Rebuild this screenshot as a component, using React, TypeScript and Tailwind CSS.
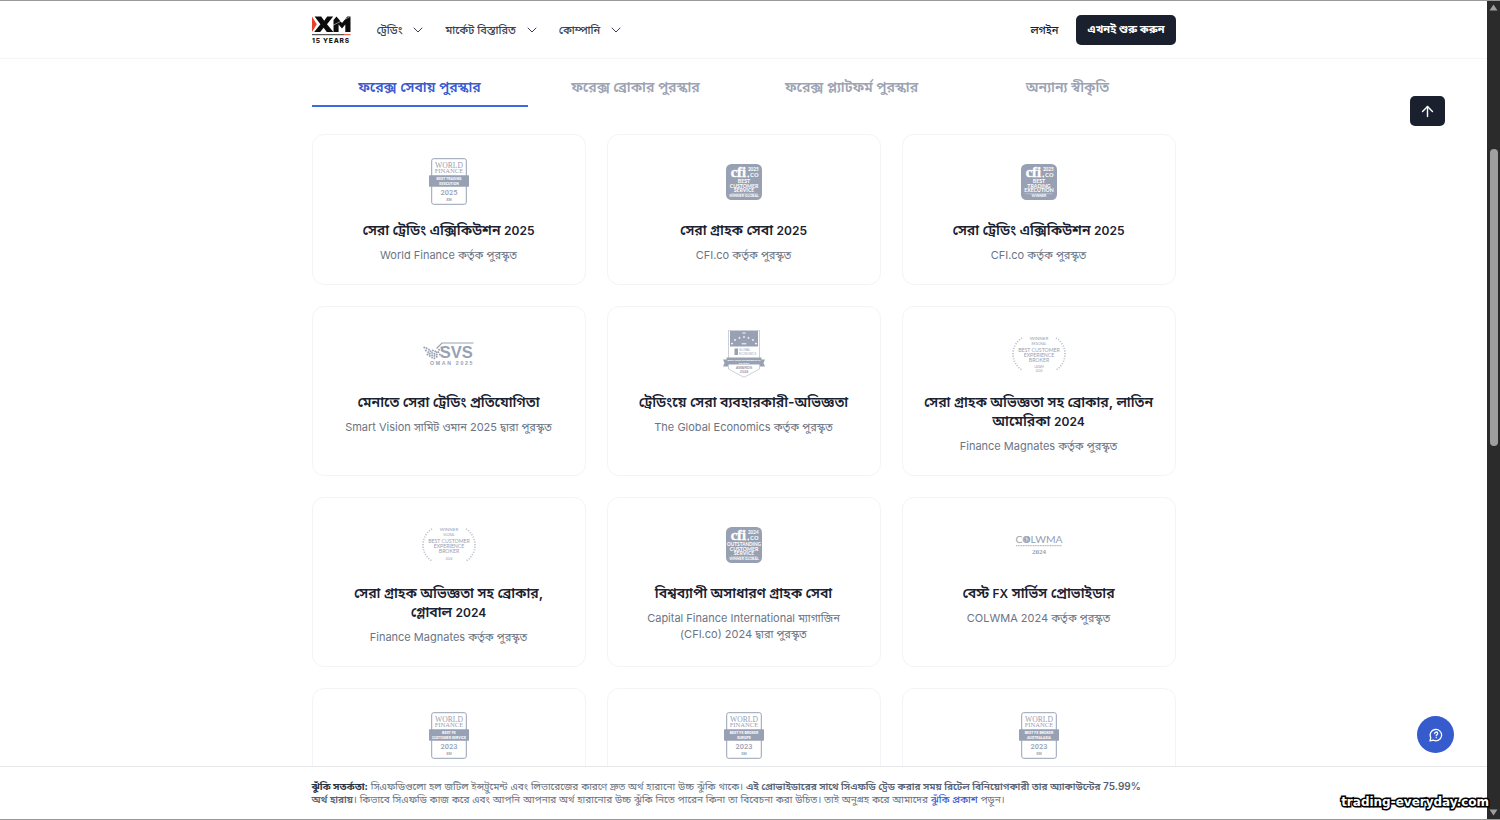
import { ArrowUp, ChevronDown } from "lucide-react";
import type { ReactNode } from "react";

const INK = "#98a1b3";

function XmLogo() {
  return (
    <svg width="40" height="28" viewBox="1 0 40 28" aria-label="XM 15 Years" role="img">
      <path d="M1 0.500L5.800 8.300L1 16z" fill="#e8402a" />
      <path d="M3.600 0.500h6.600l3 4.200 3-4.200h6l-6.200 7.700 6.400 7.800h-6.600l-3.200-4.300L9.200 16H3.200l6.200-7.800z" fill="#0c0c0c" />
      <path d="M22.500 16V3.900L25.500 0.500l5.500 6.600 5.300-6.600H39.500V16h-5.200V8.400L31 12.500l-3.400-4.100V16z" fill="#0c0c0c" />
      <path d="M21.500 9.500L38.500 1" stroke="#fff" strokeWidth="0.500" />
      <path d="M1 18.700h32" stroke="#333" strokeWidth="1" />
      <path d="M33 18.700h6.500" stroke="#e8402a" strokeWidth="1" />
      <text x="1" y="27" fontSize="6.600" fontWeight="800" fill="#1a1a1a" letterSpacing="0.800" fontFamily="Inter, sans-serif">15 YEARS</text>
    </svg>
  );
}

function WorldFinance({ lines, year }: { lines: [string, string]; year: string }) {
  return (
    <svg width="42" height="47" viewBox="0 0 42 47" fill={INK} textAnchor="middle" aria-hidden="true">
      <rect x="3.700" y="0.700" width="34.600" height="45.600" rx="2" fill="none" stroke={INK} strokeWidth="1" />
      <g fontFamily="Liberation Serif, serif" fontSize="7.600">
        <text x="21" y="9.600">WORLD</text>
        <text x="21" y="15" fontSize="6.600">FINANCE</text>
      </g>
      <rect x="1" y="17.300" width="40" height="11.500" rx="0.700" />
      <g fontFamily="Roboto, sans-serif" fontWeight="700">
        <text x="21" y="22.200" fontSize="3.600" fill="#fff">{lines[0]}</text>
        <text x="21" y="26.800" fontSize="3.600" fill="#fff">{lines[1]}</text>
        <text x="21" y="36.800" fontSize="7.400" fontWeight="500">{year}</text>
        <text x="21" y="43" fontSize="3.600">XM</text>
      </g>
    </svg>
  );
}

function Cfi({ year, lines, footer }: { year: string; lines: string[]; footer: string }) {
  return (
    <svg width="36" height="36" viewBox="0 0 36 36" fill="#fff" textAnchor="middle" aria-hidden="true">
      <rect width="36" height="36" rx="5.500" fill={INK} />
      <text x="12.300" y="13.300" fontSize="14.500" fontWeight="700" stroke="#fff" strokeWidth="0.400" fontFamily="Liberation Serif, serif">cfi</text>
      <circle cx="22.300" cy="12.500" r="0.900" />
      <g fontFamily="Lato, sans-serif" fontWeight="700">
        <text x="27.300" y="7.200" fontSize="4.600">{year}</text>
        <text x="28.300" y="13.400" fontSize="8.200" fontWeight="500">co</text>
        {lines.map((line, i) => (
          <text key={line} x="18" y={19 + i * 4.7} fontSize={line.length > 9 ? 4.7 : 5.2}>{line}</text>
        ))}
        <path d="M4.500 29.700h27" stroke="#fff" strokeWidth="0.300" />
        <text x="18" y="33.400" fontSize="3.600">{footer}</text>
      </g>
    </svg>
  );
}

const WING_DOTS = [
  [0, 2], [3, 3], [6, 5], [2, 6], [5, 8], [8, 7], [4, 11], [7, 10], [10, 9], [7, 13], [10, 12],
  [13, 10], [10, 15], [13, 13], [16, 8], [16, 11], [19, 5], [18, 8], [13, 16], [11, 6], [14, 7], [22, 2], [16, 14], [20, 11],
];

function Svs() {
  return (
    <svg width="52" height="24" viewBox="0 0 52 24" fill={INK} aria-hidden="true">
      <g transform="translate(0.500 3) scale(0.780)">
        {WING_DOTS.map(([x, y]) => (
          <rect key={`${x}-${y}`} x={x} y={y} width="2.200" height="2.200" transform={`rotate(45 ${x + 1} ${y + 1})`} />
        ))}
      </g>
      <path d="M13.500 6.500L19 1H50.500" fill="none" stroke={INK} strokeWidth="1.200" />
      <g fontFamily="Liberation Sans, sans-serif" fontWeight="700">
        <text x="16.800" y="16" fontSize="16.500">SVS</text>
        <text x="7" y="22.700" fontSize="5.200" letterSpacing="1.700">OMAN 2025</text>
      </g>
    </svg>
  );
}

const STARS = [[10, 13.5], [13, 10], [17.5, 7.8], [22, 7], [26.5, 7.8], [31, 10], [34, 13.5]];

function GlobalEconomics() {
  return (
    <svg width="44" height="48" viewBox="0 0 44 48" fill={INK} textAnchor="middle" aria-hidden="true">
      <path d="M6.500 0.500h31V39L22 47.300 6.500 39z" fill="#fff" stroke={INK} strokeWidth="0.500" />
      <path d="M8 1h28v15.500H8z" />
      <g fill="#fff">
        {STARS.map(([x, y]) => (
          <path key={x} transform={`translate(${x} ${y})`} d="M0-1.300L.4-.4 1.300-.4.6.2.9 1.200 0 .6-.9 1.200-.6.2-1.300-.4-.4-.4z" />
        ))}
        <rect x="20.500" y="2.500" width="3" height="1" />
        <rect x="19.700" y="13.300" width="4.600" height="1" />
      </g>
      <path d="M12.500 18.500h3.500v6.500h-3.500z" />
      <g fontFamily="Liberation Sans, sans-serif" textAnchor="start" fontSize="2.800">
        <text x="17" y="21.200">GLOBAL</text>
        <text x="17" y="24.500">ECONOMICS</text>
      </g>
      <path d="M1 29.500h5v7H1l1.500-3.500zM43 29.500h-5v7h5L41.500 33z" />
      <path d="M4.500 27.500h35v7h-35z" />
      <g fontFamily="Liberation Sans, sans-serif" fontWeight="700">
        <text x="22" y="30.500" fontSize="2.400" fill="#fff">BEST USER EXPERIENCE IN</text>
        <text x="22" y="33.500" fontSize="2.400" fill="#fff">TRADING</text>
        <text x="22" y="38.700" fontSize="3.800">AWARDS</text>
        <text x="22" y="42.800" fontSize="3.800">2024</text>
      </g>
    </svg>
  );
}

function FinanceMagnates({ scope, region }: { scope: string; region?: string }) {
  return (
    <svg width="54" height="38" viewBox="0 0 54 38" fill={INK} textAnchor="middle" aria-hidden="true">
      <path d="M10 3A18.700 18.700 0 0 0 10 35M44 3A18.700 18.700 0 0 1 44 35" fill="none" stroke={INK} strokeOpacity="0.650" strokeWidth="1.700" strokeDasharray="1.100 1.500" />
      <g fontFamily="Lato, sans-serif">
        <text x="27" y="4.500" fontSize="4.600">WINNER</text>
        <text x="27" y="10" fontSize="3">{scope}</text>
        <g fontSize="5.200">
          <text x="27" y="17">BEST CUSTOMER</text>
          <text x="27" y="22.200">EXPERIENCE</text>
          <text x="27" y="27.400">BROKER</text>
        </g>
        {region && <text x="27" y="33" fontSize="3">{region}</text>}
        <text x="27" y={region ? 36.5 : 33.5} fontSize="3">2024</text>
      </g>
    </svg>
  );
}

function Colwma() {
  return (
    <svg width="48" height="22" viewBox="0 0 48 22" fill={INK} textAnchor="middle" aria-hidden="true">
      <text x="24" y="9" fontSize="10.400" fontFamily="Lato, sans-serif">COLWMA</text>
      <circle cx="12" cy="5.200" r="3" />
      <path d="M10.300 4.200l3.500 2M11.800 2.700v5" stroke="#fff" strokeWidth="0.600" />
      <path d="M1 11.700h46" stroke={INK} strokeWidth="0.900" strokeDasharray="1.200 0.500" />
      <text x="24" y="19.700" fontSize="7" fontWeight="700" fontFamily="Liberation Serif, serif">2024</text>
    </svg>
  );
}

type Award = { logo: ReactNode; title: string; by: string };

const awards: Award[] = [
  { logo: <WorldFinance lines={["BEST TRADING", "EXECUTION"]} year="2025" />, title: "সেরা ট্রেডিং এক্সিকিউশন 2025", by: "World Finance কর্তৃক পুরস্কৃত" },
  { logo: <Cfi year="2025" lines={["BEST", "CUSTOMER", "SERVICE"]} footer="WINNER GLOBAL" />, title: "সেরা গ্রাহক সেবা 2025", by: "CFI.co কর্তৃক পুরস্কৃত" },
  { logo: <Cfi year="2025" lines={["BEST", "TRADING", "EXECUTION"]} footer="WINNER" />, title: "সেরা ট্রেডিং এক্সিকিউশন 2025", by: "CFI.co কর্তৃক পুরস্কৃত" },
  { logo: <Svs />, title: "মেনাতে সেরা ট্রেডিং প্রতিযোগিতা", by: "Smart Vision সামিট ওমান 2025 দ্বারা পুরস্কৃত" },
  { logo: <GlobalEconomics />, title: "ট্রেডিংয়ে সেরা ব্যবহারকারী-অভিজ্ঞতা", by: "The Global Economics কর্তৃক পুরস্কৃত" },
  { logo: <FinanceMagnates scope="REGIONAL" region="LATAM" />, title: "সেরা গ্রাহক অভিজ্ঞতা সহ ব্রোকার, লাতিন আমেরিকা 2024", by: "Finance Magnates কর্তৃক পুরস্কৃত" },
  { logo: <FinanceMagnates scope="GLOBAL" />, title: "সেরা গ্রাহক অভিজ্ঞতা সহ ব্রোকার, গ্লোবাল\u00a02024", by: "Finance Magnates কর্তৃক পুরস্কৃত" },
  { logo: <Cfi year="2024" lines={["OUTSTANDING", "CUSTOMER", "SERVICE"]} footer="WINNER GLOBAL" />, title: "বিশ্বব্যাপী অসাধারণ গ্রাহক সেবা", by: "Capital Finance International ম্যাগাজিন (CFI.co) 2024 দ্বারা পুরস্কৃত" },
  { logo: <Colwma />, title: "বেস্ট FX সার্ভিস প্রোভাইডার", by: "COLWMA 2024 কর্তৃক পুরস্কৃত" },
  { logo: <WorldFinance lines={["BEST FX", "CUSTOMER SERVICE"]} year="2023" />, title: "সেরা FX গ্রাহক সেবা", by: "World Finance কর্তৃক পুরস্কৃত" },
  { logo: <WorldFinance lines={["BEST FX BROKER", "EUROPE"]} year="2023" />, title: "সেরা FX ব্রোকার, ইউরোপ", by: "World Finance কর্তৃক পুরস্কৃত" },
  { logo: <WorldFinance lines={["BEST FX BROKER", "AUSTRALASIA"]} year="2023" />, title: "সেরা FX ব্রোকার, অস্ট্রেলেশিয়া", by: "World Finance কর্তৃক পুরস্কৃত" },
];

const menus = ["ট্রেডিং", "মার্কেট বিস্তারিত", "কোম্পানি"];
const tabs = ["ফরেক্স সেবায় পুরস্কার", "ফরেক্স ব্রোকার পুরস্কার", "ফরেক্স প্ল্যাটফর্ম পুরস্কার", "অন্যান্য স্বীকৃতি"];

// Latin letters and digits are set a little smaller so that they sit level with the Bengali.
function MixedScript({ text }: { text: string }) {
  return (
    <>
      {text.split(/([A-Za-z0-9]+)/).map((part, i) =>
        i % 2 ? <span key={i} className="text-[12px] leading-none">{part}</span> : part,
      )}
    </>
  );
}

function AwardCard({ logo, title, by }: Award) {
  return (
    <article className="flex flex-col items-center rounded-xl border border-[#f3f4f6] px-5 pt-[23px] pb-[21px] text-center">
      <div className="flex h-[47px] items-center">{logo}</div>
      <h3 className="mt-[15px] text-[14px] leading-[19px] font-semibold text-[#1a2130]"><MixedScript text={title} /></h3>
      <p className="mt-2 text-[11px] leading-4 text-[#6b7485]">{by}</p>
    </article>
  );
}

export default function App() {
  return (
    <div className="relative flex h-screen overflow-hidden border-y border-[#999] bg-white font-['Inter','Noto_Sans_Bengali','Noto_Sans',sans-serif]">
      <div className="flex min-w-0 flex-1 flex-col">
        <header className="shrink-0 border-b border-[#f6f6f7]">
          <div className="mx-auto flex h-[57px] max-w-[864px] items-center">
            <a href="#home"><XmLogo /></a>
            <nav className="ml-[25px] flex gap-[19px]">
              {menus.map((m) => (
                <button key={m} className="flex items-center gap-2 text-[11px] leading-4 font-medium text-[#374151]">
                  {m}
                  <ChevronDown size={16} strokeWidth={1.5} />
                </button>
              ))}
            </nav>
            <div className="ml-auto flex items-center gap-[18px]">
              <a href="#login" className="text-[11px] leading-4 font-medium text-[#1a2130]">লগইন</a>
              <button className="h-[30px] rounded-[5px] bg-[#1a202e] px-[11px] text-[11px] font-bold text-white">এখনই শুরু করুন</button>
            </div>
          </div>
        </header>

        <main className="min-h-0 flex-1 overflow-hidden">
          <div className="mx-auto max-w-[864px]">
            <div role="tablist" className="mb-[27px] grid grid-cols-4">
              {tabs.map((t, i) => (
                <button
                  key={t}
                  role="tab"
                  aria-selected={i === 0}
                  className={
                    i === 0
                      ? "h-12 border-b-2 border-[#3b6be4] pt-2 text-[14px] font-semibold text-[#3a5bd0]"
                      : "h-12 border-b-2 border-transparent pt-2 text-[14px] font-semibold text-[#9ca3b3]"
                  }
                >
                  {t}
                </button>
              ))}
            </div>
            <div className="grid grid-cols-3 gap-[21px]">
              {awards.map((a, i) => <AwardCard key={i} {...a} />)}
            </div>
          </div>
        </main>

        <footer className="shrink-0 border-t border-[#e5e7eb] bg-white">
          <p className="mx-auto max-w-[864px] py-[13px] text-[10px] leading-[13px] text-[#6b7280]">
            <strong className="font-bold text-[#2b3342]">ঝুঁকি সতর্কতা:</strong> সিএফডিগুলো হল জটিল ইন্সট্রুমেন্ট এবং লিভারেজের কারণে দ্রুত অর্থ হারানো উচ্চ ঝুঁকি থাকে।{" "}
            <strong className="font-semibold text-[#596273]">এই প্রোভাইডারের সাথে সিএফডি ট্রেড করার সময় রিটেল বিনিয়োগকারী তার অ্যাকাউন্টের 75.99% <span className="whitespace-nowrap"><br />অর্থ হারায়</span></strong>। কিভাবে সিএফডি কাজ করে এবং আপনি আপনার অর্থ হারানোর উচ্চ ঝুঁকি নিতে পারেন কিনা তা বিবেচনা করা উচিত। তাই অনুগ্রহ করে আমাদের{" "}
            <a href="#risk" className="font-medium text-[#3a5bd0]">ঝুঁকি প্রকাশ</a> পড়ুন।
          </p>
        </footer>
      </div>

      <div className="flex w-[13px] shrink-0 flex-col items-center bg-[#2b2b2b] py-[3px]" aria-hidden="true">
        <svg width="9" height="7" viewBox="0 0 9 7"><path d="M4.500 0.500L8.500 6.500H0.500z" fill="#9f9f9f" /></svg>
        <div className="flex w-2 flex-1 flex-col">
          <div className="grow-[138]" />
          <div className="grow-[297] rounded-full bg-[#9f9f9f]" />
          <div className="grow-[363]" />
        </div>
        <svg width="9" height="7" viewBox="0 0 9 7"><path d="M4.500 6.500L8.500 0.500H0.500z" fill="#9f9f9f" /></svg>
      </div>

      <button aria-label="Back to top" className="absolute top-[95px] right-[55px] flex h-[30px] w-[35px] items-center justify-center rounded-[5px] bg-[#1a202e] text-white">
        <ArrowUp size={17} strokeWidth={2} />
      </button>
      <button aria-label="Help" className="absolute right-[46px] bottom-[66px] flex size-[37px] items-center justify-center rounded-full bg-[#355bcd] text-white">
        <svg width="14" height="14" viewBox="0 0 14 14" fill="none" stroke="currentColor" strokeWidth="1.300" strokeLinecap="round" strokeLinejoin="round">
          <path d="M1 12.800L1.800 9.700A5.700 5.700 0 1 1 4.300 12.200z" />
          <path d="M5.700 5.600a1.500 1.500 0 1 1 2.300 1.200c-.6.400-.8.600-.8 1M7.200 9.600v.1" />
        </svg>
      </button>
      <div className="absolute right-[11px] bottom-[9px] font-['DejaVu_Sans',sans-serif] text-[12px] leading-4 font-bold text-white [paint-order:stroke_fill] [-webkit-text-stroke:3px_black]">trading-everyday.com</div>
    </div>
  );
}
